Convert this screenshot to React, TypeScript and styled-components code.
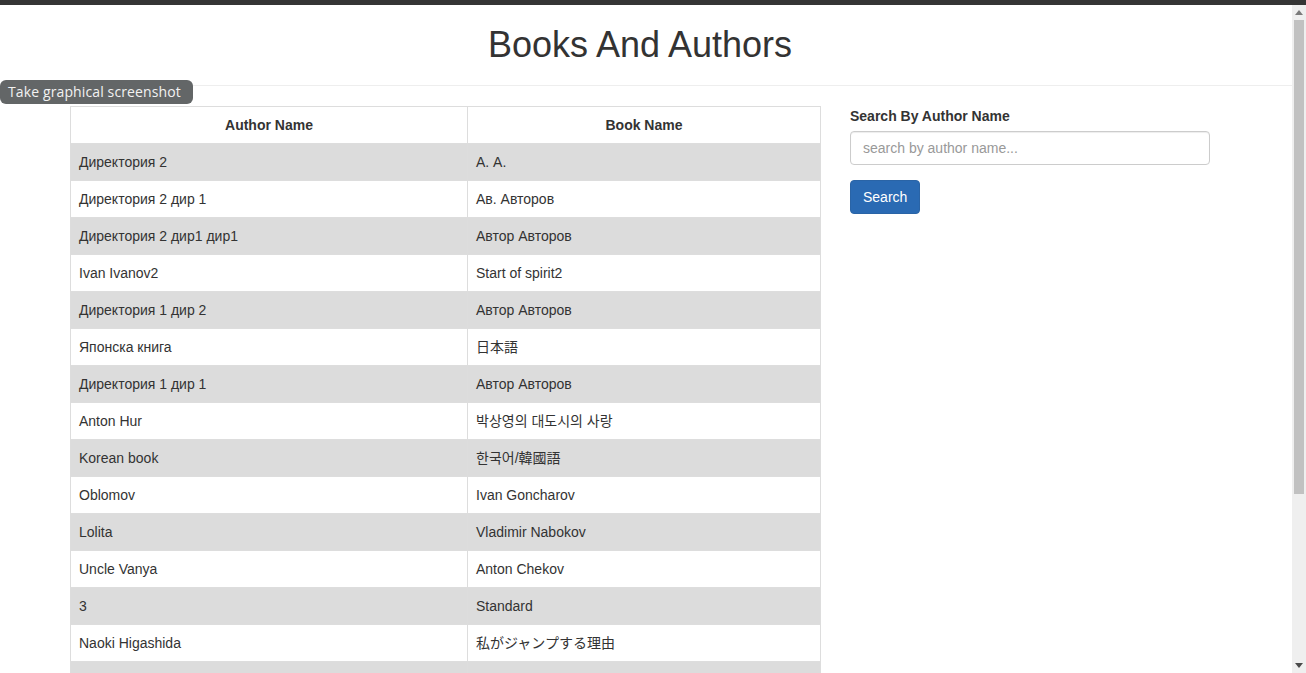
import React, { useState } from 'react';
import styled, { createGlobalStyle } from 'styled-components';

const GlobalStyle = createGlobalStyle`
  html, body {
    margin: 0;
    padding: 0;
    height: 100%;
    overflow: hidden;
    background: #fff;
  }
  body {
    font-family: 'Liberation Sans', 'Noto Sans CJK JP', 'Noto Sans CJK KR', sans-serif;
    font-size: 14px;
    line-height: 1.42857;
    color: #333;
  }
  * { box-sizing: border-box; }
`;

const rows: [string, string][] = [
  ['Директория 2', 'А. А.'],
  ['Директория 2 дир 1', 'Ав. Авторов'],
  ['Директория 2 дир1 дир1', 'Автор Авторов'],
  ['Ivan Ivanov2', 'Start of spirit2'],
  ['Директория 1 дир 2', 'Автор Авторов'],
  ['Японска книга', '日本語'],
  ['Директория 1 дир 1', 'Автор Авторов'],
  ['Anton Hur', '박상영의 대도시의 사랑'],
  ['Korean book', '한국어/韓國語'],
  ['Oblomov', 'Ivan Goncharov'],
  ['Lolita', 'Vladimir Nabokov'],
  ['Uncle Vanya', 'Anton Chekov'],
  ['3', 'Standard'],
  ['Naoki Higashida', '私がジャンプする理由'],
  ['', ''],
];

const Window = styled.div`
  display: flex;
  flex-direction: column;
  height: 673px;
  width: 1306px;
`;

const TopBar = styled.div`
  height: 5px;
  background: #353535;
  flex-shrink: 0;
`;

const Viewport = styled.div`
  display: flex;
  flex: 1;
  min-height: 0;
`;

const Page = styled.div`
  position: relative;
  width: 1292px;
  overflow: hidden;
`;

const Header = styled.header`
  border-bottom: 1px solid #eee;
`;

const Container = styled.div`
  width: 1170px;
  margin-left: 55px;
  padding: 0 15px;
`;

const Title = styled.h1`
  margin: 20px 0 20px;
  font-size: 36px;
  font-weight: 500;
  line-height: 1.1;
  text-align: center;
  color: #333;
`;

const Row = styled.div`
  display: grid;
  grid-template-columns: 780px 390px;
  margin: 0 -15px;
  padding-top: 20px;
`;

const Col = styled.div`
  padding: 0 15px;
`;

const Table = styled.table`
  width: 750px;
  border-collapse: collapse;
  border-spacing: 0;
  table-layout: fixed;
  border: 1px solid #ddd;
`;

const Th = styled.th`
  padding: 8px;
  border: 1px solid #ddd;
  font-weight: 700;
  text-align: center;
  line-height: 20px;
`;

const Tr = styled.tr<{ $striped: boolean }>`
  background: ${p => (p.$striped ? '#dcdcdc' : '#fff')};
`;

const Td = styled.td`
  padding: 8px;
  height: 37px;
  border: 1px solid #ddd;
  line-height: 20px;
  white-space: nowrap;
`;

const FormGroup = styled.div`
  margin-bottom: 15px;
`;

const Label = styled.label`
  display: block;
  padding-top: 1px;
  margin-bottom: 4px;
  font-weight: 700;
`;

const Input = styled.input`
  display: block;
  width: 360px;
  height: 34px;
  padding: 6px 12px;
  font-family: inherit;
  font-size: 14px;
  color: #555;
  border: 1px solid #ccc;
  border-radius: 4px;
  box-shadow: inset 0 1px 1px rgba(0, 0, 0, 0.075);
  outline: none;

  &::placeholder {
    color: #999;
  }
`;

const Button = styled.button`
  height: 34px;
  padding: 6px 12px;
  font-family: inherit;
  font-size: 14px;
  line-height: 20px;
  color: #fff;
  background: #2a6ab3;
  border: 1px solid #2a64a6;
  border-radius: 4px;
  cursor: pointer;
`;

const Tooltip = styled.div`
  position: absolute;
  left: 0;
  top: 75px;
  width: 193px;
  height: 24px;
  padding: 0 8px;
  background: #636667;
  border-radius: 6px;
  color: #f2f2f2;
  font-family: 'Open Sans', 'DejaVu Sans', sans-serif;
  font-size: 14px;
  letter-spacing: 0.12px;
  line-height: 24px;
  white-space: nowrap;
`;

const Scrollbar = styled.div`
  width: 14px;
  background: #efefef;
  display: flex;
  flex-direction: column;
  align-items: center;
`;

const ArrowBtn = styled.div`
  height: 15px;
  width: 14px;
  display: flex;
  align-items: center;
  justify-content: center;
  flex-shrink: 0;
`;

const Track = styled.div`
  flex: 1;
  width: 14px;
  padding: 0 2px;
`;

const Thumb = styled.div`
  height: 474px;
  background: #c1c1c1;
`;

const App: React.FC = () => {
  const [query, setQuery] = useState('');

  return (
    <Window>
      <GlobalStyle />
      <TopBar />
      <Viewport>
        <Page>
          <Header>
            <Container>
              <Title>Books And Authors</Title>
            </Container>
          </Header>
          <Container>
            <Row>
              <Col>
                <Table>
                  <colgroup>
                    <col style={{ width: 397 }} />
                    <col style={{ width: 353 }} />
                  </colgroup>
                  <thead>
                    <tr>
                      <Th>Author Name</Th>
                      <Th>Book Name</Th>
                    </tr>
                  </thead>
                  <tbody>
                    {rows.map(([author, book], i) => (
                      <Tr key={i} $striped={i % 2 === 0}>
                        <Td>{author}</Td>
                        <Td>{book}</Td>
                      </Tr>
                    ))}
                  </tbody>
                </Table>
              </Col>
              <Col>
                <FormGroup>
                  <Label htmlFor="author">Search By Author Name</Label>
                  <Input
                    id="author"
                    type="text"
                    placeholder="search by author name..."
                    value={query}
                    onChange={e => setQuery(e.target.value)}
                  />
                </FormGroup>
                <Button type="button">Search</Button>
              </Col>
            </Row>
          </Container>
          <Tooltip>Take graphical screenshot</Tooltip>
        </Page>
        <Scrollbar>
          <ArrowBtn>
            <svg width="8" height="5" viewBox="0 0 8 5">
              <path d="M0 5 L4 0 L8 5 Z" fill="#7a7a7a" />
            </svg>
          </ArrowBtn>
          <Track>
            <Thumb />
          </Track>
          <ArrowBtn>
            <svg width="8" height="5" viewBox="0 0 8 5">
              <path d="M0 0 L8 0 L4 5 Z" fill="#4a4a4a" />
            </svg>
          </ArrowBtn>
        </Scrollbar>
      </Viewport>
    </Window>
  );
};

export default App;
